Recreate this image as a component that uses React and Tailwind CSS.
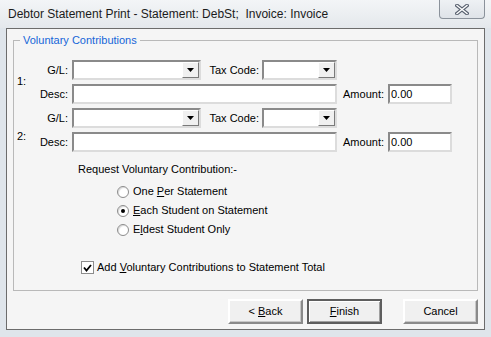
import React from "react";

const sunken =
  "border-2 border-t-[#8a8a8a] border-l-[#8a8a8a] border-b-[#dcdcdc] border-r-[#dcdcdc] bg-white";

function Combo({ width }) {
  return (
    <div className={`${sunken} h-[20px] flex justify-end ${width}`}>
      <div className="w-[17px] h-full bg-[#f0f0f0] border border-t-white border-l-white border-b-[#7a7a7a] border-r-[#7a7a7a] flex items-center justify-center">
        <svg width="7" height="4" viewBox="0 0 7 4">
          <path d="M0 0 L7 0 L3.5 4 Z" fill="#000" />
        </svg>
      </div>
    </div>
  );
}

function TextBox({ width, value }) {
  return (
    <div className={`${sunken} h-[20px] pl-[1px] flex items-center ${width}`}>
      {value}
    </div>
  );
}

function Item({ num, numPad }) {
  return (
    <div className="flex">
      <div className={`w-[16px] ml-[3px] ${numPad}`}>{num}</div>
      <div className="flex flex-col gap-[4px]">
        <div className="flex items-center h-[20px]">
          <div className="w-[35px] text-right">G/L:</div>
          <div className="ml-[4px]">
            <Combo width="w-[129px]" />
          </div>
          <div className="w-[61px] text-right pr-[3px]">Tax Code:</div>
          <Combo width="w-[75px]" />
        </div>
        <div className="flex items-center h-[20px]">
          <div className="w-[35px] text-right">Desc:</div>
          <div className="ml-[4px]">
            <TextBox width="w-[265px]" />
          </div>
          <div className="w-[51px] text-right pr-[4px]">Amount:</div>
          <TextBox width="w-[64px]" value="0.00" />
        </div>
      </div>
    </div>
  );
}

function Radio({ checked, children }) {
  return (
    <div className="flex items-center h-[19px]">
      <div className="w-[12px] h-[12px] rounded-full border border-[#8c8c8c] bg-white flex items-center justify-center shadow-[inset_1px_1px_1px_rgba(0,0,0,0.15)]">
        {checked && <div className="w-[4px] h-[4px] rounded-full bg-black" />}
      </div>
      <span className="ml-[4px]">{children}</span>
    </div>
  );
}

function Button({ children, primary }) {
  return (
    <div
      className={`w-[75px] h-[25px] flex items-center justify-center bg-[#f0f0f0] ${
        primary
          ? "border-2 border-[#5e5e5e] shadow-[inset_1px_1px_0_#fff,inset_-1px_-1px_0_#a0a0a0]"
          : "border-2 border-t-white border-l-white border-b-[#8a8a8a] border-r-[#8a8a8a] shadow-[inset_-1px_-1px_0_#c8c8c8]"
      }`}
    >
      <span>{children}</span>
    </div>
  );
}

export default function App() {
  return (
    <div className="w-[491px] h-[337px] overflow-hidden bg-[#dfe5eb] font-['Liberation_Sans',Arial,sans-serif] text-[11px] leading-[13px] text-black select-none">
      {/* Title bar */}
      <div className="h-[28px] flex items-start justify-between bg-gradient-to-b from-[#f3f5f7] to-[#e4e8ec]">
        <div className="pl-[8px] pt-[7px] text-[12px] leading-[14px] text-[#1b1b1b]">
          Debtor Statement Print - Statement: DebSt;&nbsp; Invoice: Invoice
        </div>
        <div className="mr-[6px] w-[46px] h-[19px] rounded-b-[4px] border border-t-0 border-[#8b929b] bg-gradient-to-b from-[#eef1f4] to-[#dfe3e8] flex items-center justify-center">
          <svg width="14" height="11" viewBox="0 0 14 11">
            <path d="M2 1.5 L12 9.5 M12 1.5 L2 9.5" stroke="#596270" strokeWidth="3.6" strokeLinecap="square" />
            <path d="M2 1.5 L12 9.5 M12 1.5 L2 9.5" stroke="#ffffff" strokeWidth="1.4" strokeLinecap="square" />
          </svg>
        </div>
      </div>

      {/* Client area */}
      <div className="ml-[6px] w-[479px] h-[302px] border border-[#6c6c6c] bg-[#f5f5f5] px-[6px] pt-[11px]">
        <div className="relative h-[251px] border border-[#b9b9b9] pt-[19px]">
          <span className="absolute left-[6px] top-[-7px] px-[3px] bg-[#f5f5f5] text-[#1565d8]">
            Voluntary Contributions
          </span>

          <div className="flex flex-col gap-[4px]">
            <Item num="1:" numPad="pt-[15px]" />
            <Item num="2:" numPad="pt-[22px]" />
          </div>

          <div className="ml-[64px] mt-[11px] h-[14px]">Request Voluntary Contribution:-</div>

          <div className="ml-[103px] mt-[5px] flex flex-col">
            <Radio>
              One <u>P</u>er Statement
            </Radio>
            <Radio checked>
              <u>E</u>ach Student on Statement
            </Radio>
            <Radio>
              E<u>l</u>dest Student Only
            </Radio>
          </div>

          <div className="ml-[67px] mt-[19px] flex items-center h-[19px]">
            <div className="w-[13px] h-[13px] border border-[#8c8c8c] bg-white flex items-center justify-center">
              <svg width="9" height="8" viewBox="0 0 9 8">
                <path d="M1 3.5 L3.5 6.5 L8 1" stroke="#000" strokeWidth="1.8" fill="none" />
              </svg>
            </div>
            <span className="ml-[3px]">
              Add <u>V</u>oluntary Contributions to Statement Total
            </span>
          </div>
        </div>

        <div className="mt-[8px] flex justify-end">
          <Button>
            &lt; <u>B</u>ack
          </Button>
          <div className="ml-[4px]">
            <Button primary>
              <u>F</u>inish
            </Button>
          </div>
          <div className="ml-[21px]">
            <Button>Cancel</Button>
          </div>
        </div>
      </div>
    </div>
  );
}
